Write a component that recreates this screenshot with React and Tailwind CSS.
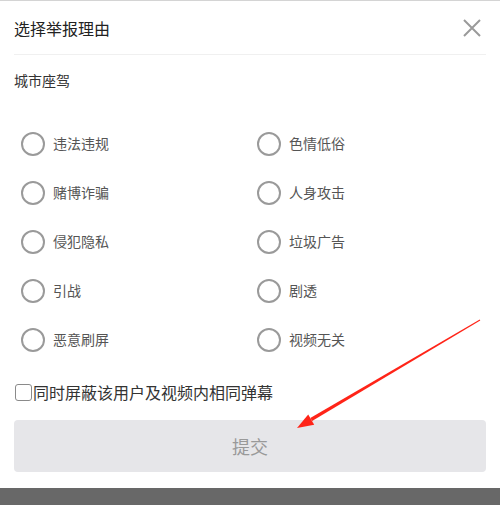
import React from "react";

const reasons = [
  ["违法违规", "色情低俗"],
  ["赌博诈骗", "人身攻击"],
  ["侵犯隐私", "垃圾广告"],
  ["引战", "剧透"],
  ["恶意刷屏", "视频无关"],
];

function Radio({ label }) {
  return (
    <div className="flex items-center h-[49px]">
      <span className="ml-[7px] w-[24px] h-[24px] rounded-full border-2 border-[#9a9a9a] shrink-0" />
      <span className="ml-[8px] text-[14px] text-[#555]">{label}</span>
    </div>
  );
}

export default function App() {
  return (
    <div
      className="relative w-[500px] h-[505px] bg-white overflow-hidden flex flex-col"
      style={{ fontFamily: '"Noto Sans CJK SC", "Noto Sans", sans-serif' }}
    >
      <div className="h-[1px] bg-[#d4d4d4]" />
      <div className="px-[14px] flex-1">
        <div className="h-[54px] flex items-center justify-between border-b border-[#f0f0f0]">
          <span className="text-[16px] text-[#222]">选择举报理由</span>
          <svg width="20" height="20" viewBox="0 0 20 20" className="mr-[4px]">
            <path d="M2 2L18 18M18 2L2 18" stroke="#9a9a9a" strokeWidth="2" />
          </svg>
        </div>
        <div className="h-[50px] flex items-center text-[14px] text-[#333]">城市座驾</div>
        <div className="mt-[14px] grid grid-cols-2">
          {reasons.map(([a, b]) => (
            <React.Fragment key={a}>
              <Radio label={a} />
              <Radio label={b} />
            </React.Fragment>
          ))}
        </div>
        <div className="h-[56px] flex items-center">
          <span className="ml-[1px] w-[17px] h-[17px] rounded-[3px] border-[1.5px] border-[#8a8a8a] shrink-0" />
          <span className="ml-[1px] text-[16px] text-[#333]">同时屏蔽该用户及视频内相同弹幕</span>
        </div>
        <div className="h-[52px] rounded-[4px] bg-[#e6e6e9] flex items-center justify-center text-[18px] text-[#999]">
          提交
        </div>
      </div>
      <div className="h-[17px] bg-[#686868]" />
      <svg className="absolute inset-0 pointer-events-none" width="500" height="505" viewBox="0 0 500 505">
        <polygon points="480.25,320.43 479.75,319.57 310.3,418.1 312.1,421.1" fill="#ff2418" />
        <polygon points="314.2,424.8 308.2,414.4 297,428" fill="#ff2418" />
      </svg>
    </div>
  );
}
